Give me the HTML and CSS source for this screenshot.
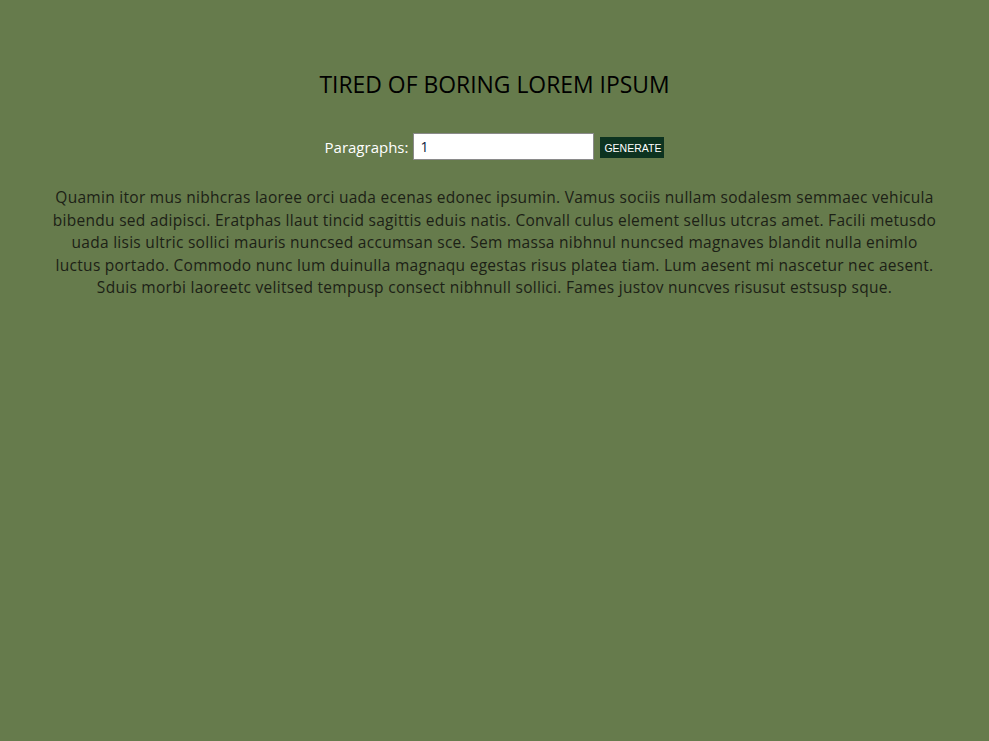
FILE: index.html
```html
<!DOCTYPE html>
<html>
<head>
<meta charset="utf-8">
<link rel="stylesheet" href="styles.css">
</head>
<body>
<main class="page">
  <h1 class="title">TIRED OF BORING LOREM IPSUM</h1>
  <form class="controls">
    <label class="label" for="amount">Paragraphs:</label>
    <input class="amount" id="amount" type="number" value="1">
    <button class="btn" type="button">GENERATE</button>
  </form>
  <section class="text">
    <p>Quamin itor mus nibhcras laoree orci uada ecenas edonec ipsumin. Vamus sociis nullam sodalesm semmaec vehicula bibendu sed adipisci. Eratphas llaut tincid sagittis eduis natis. Convall culus element sellus utcras amet. Facili metusdo uada lisis ultric sollici mauris nuncsed accumsan sce. Sem massa nibhnul nuncsed magnaves blandit nulla enimlo luctus portado. Commodo nunc lum duinulla magnaqu egestas risus platea tiam. Lum aesent mi nascetur nec aesent. Sduis morbi laoreetc velitsed tempusp consect nibhnull sollici. Fames justov nuncves risusut estsusp sque.</p>
  </section>
</main>
</body>
</html>
```
FILE: styles.css
```css
html, body {
  margin: 0;
  padding: 0;
  background: #667b4c;
  min-height: 100%;
}
body {
  font-family: "Open Sans", "DejaVu Sans", sans-serif;
  color: #111;
}
.page {
  display: flex;
  flex-direction: column;
  align-items: center;
  padding-top: 70px;
}
.title {
  margin: 0;
  font-size: 22.9px;
  font-weight: 400;
  line-height: 30px;
  color: #000;
}
.controls {
  display: flex;
  align-items: center;
  gap: 6px;
  margin-top: 33px;
}
.label {
  color: #fff;
  font-size: 15px;
  margin-right: -1px;
}
.amount {
  box-sizing: border-box;
  flex: none;
  width: 181px;
  height: 27px;
  padding: 0 6px;
  border: 1px solid #8a8a8a;
  font-size: 14px;
  font-family: inherit;
  background: #fff;
  color: #0a1a40;
  -moz-appearance: textfield;
}
.amount::-webkit-inner-spin-button { -webkit-appearance: none; }
.btn {
  box-sizing: border-box;
  flex: none;
  background: #0d3320;
  color: #fff;
  border: none;
  font-family: "Liberation Sans", Arial, sans-serif;
  font-size: 10.5px;
  padding: 0 4px;
  width: 64px;
  height: 21px;
  margin-top: 2px;
}
.text {
  width: 90%;
  margin-top: 26px;
}
.text p {
  margin: 0;
  text-align: center;
  font-size: 15.5px;
  font-weight: 400;
  letter-spacing: 0.28px;
  line-height: 22.6px;
  color: #1c2116;
}
```
